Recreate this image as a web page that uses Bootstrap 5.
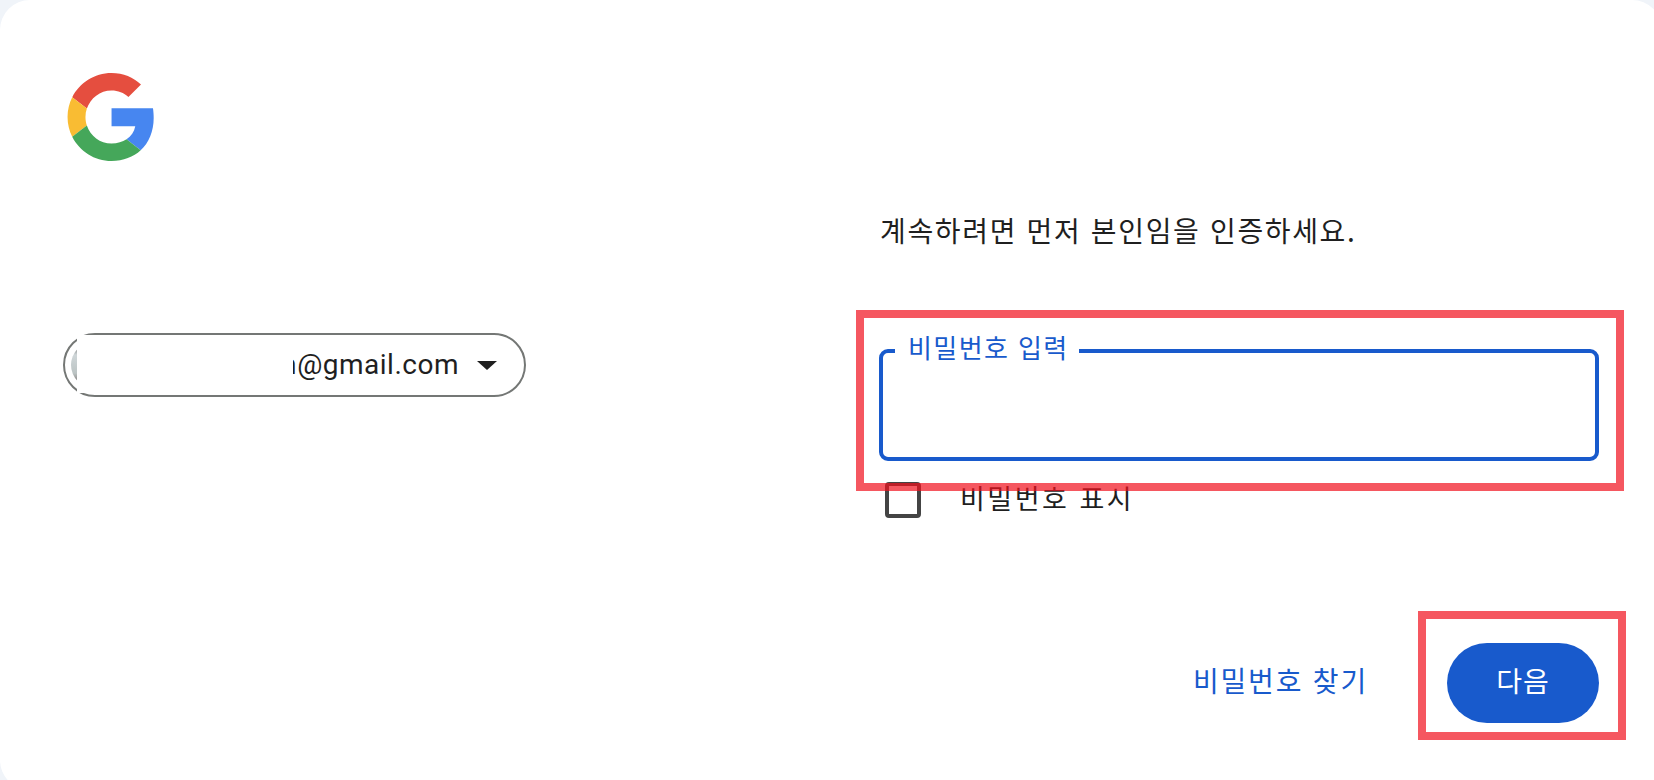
<!DOCTYPE html>
<html lang="ko">
<head>
    <meta charset="UTF-8">
    <meta name="viewport" content="width=device-width, initial-scale=1.0">
    <title>로그인</title>
    <link href="https://cdn.jsdelivr.net/npm/bootstrap@5.3.0/dist/css/bootstrap.min.css" rel="stylesheet">
    <style>
        html, body { height: 100%; }
        body {
            background: #f0f4f9;
            overflow: hidden;
            font-family: "Noto Sans CJK KR", "Liberation Sans", sans-serif;
            color: #1f1f1f;
        }
        .signin-card {
            position: relative;
            width: 1662px;
            height: 790px;
            background: #fff;
            border-radius: 30px;
            padding: 73px 0 0 63px;
        }
        .logo-g { width: 88px; height: 88px; display: block; margin-left: 4px; }
        .col-left { width: 463px; flex: none; }
        .col-right { width: 720px; flex: none; margin-left: 353px; }
        .account-chip {
            position: relative;
            height: 64px;
            margin-top: 172px;
            border: 2px solid #747775;
            border-radius: 32px;
            padding: 0 27px 0 6px;
            font-family: Roboto, sans-serif;
            font-size: 28px;
            letter-spacing: .5px;
        }
        .chip-avatar {
            width: 46px;
            height: 46px;
            border-radius: 50%;
            background: linear-gradient(#4e4a48, #cfd6d8 28%, #bcc4c4 68%, #5a4a48);
            flex: none;
        }
        .chip-arrow {
            width: 0;
            height: 0;
            border-style: solid;
            border-color: #1f1f1f transparent transparent;
            border-width: 9px 10px 0;
            margin-left: 18px;
        }
        .chip-mask { position: absolute; left: 12px; top: 0; width: 216px; height: 58px; background: #fff; }
        .intro-text { font-size: 28px; letter-spacing: 1.65px; line-height: 36px; margin: 0 0 101px 1px; padding-top: 139px; }
        .pw-field { position: relative; height: 112px; border: 4px solid #185acc; border-radius: 9px; }
        .pw-label {
            position: absolute;
            left: 12px;
            top: -24px;
            padding: 0 10px 0 13px;
            background: #fff;
            color: #185acc;
            font-size: 26px;
            letter-spacing: 1.4px;
            line-height: 36px;
            height: 32px;
        }
        .pw-row { margin-top: 21px; }
        .pw-check { width: 36px; height: 36px; border: 4px solid #444; border-radius: 4px; margin-left: 6px; }
        .pw-show { font-size: 27px; letter-spacing: 2.5px; line-height: 36px; margin: -2px 0 2px 39px; }
        .form-actions { margin-top: 125px; }
        .link-forgot { color: #185acc; font-size: 28px; letter-spacing: 1.8px; text-decoration: none; margin: 0 79px 7px 0; }
        .btn-next {
            width: 152px;
            height: 80px;
            border-radius: 40px;
            background: #185acc;
            border: 0;
            color: #fff;
            font-size: 28px;
            letter-spacing: 1px;
            padding-bottom: 12px;
        }
        .mark-box { position: absolute; border: 8px solid rgba(241, 16, 28, .7); pointer-events: none; }
        .mark-input { left: 856px; top: 310px; width: 768px; height: 181px; }
        .mark-next { left: 1418px; top: 611px; width: 208px; height: 129px; }
    </style>
</head>
<body>
    <div class="signin-card">
        <div class="d-flex">
            <div class="col-left">
                <svg class="logo-g" viewBox="0 0 47.4 48">
                    <path fill="#e54e3f" d="M24 9.5c3.54 0 6.71 1.22 9.21 3.6l6.85-6.85C35.9 2.38 30.47 0 24 0 14.62 0 6.51 5.38 2.56 13.22l7.98 6.19C12.43 13.72 17.74 9.5 24 9.5z"/>
                    <path fill="#4786f0" d="M46.98 24.55c0-1.9-.15-3.8-.38-5.35H24v9.82h12.94c-.58 2.96-2.26 5.48-4.78 7.18l7.73 6c4.51-4.18 7.09-10.36 7.09-17.65z"/>
                    <path fill="#f9bc33" d="M10.53 28.59c-.48-1.45-.76-2.99-.76-4.59s.27-3.14.76-4.59l-7.98-6.19C.92 16.46 0 20.12 0 24c0 3.88.92 7.54 2.56 10.78l7.97-6.19z"/>
                    <path fill="#45a75a" d="M24 48c6.48 0 11.93-2.13 15.89-5.81l-7.73-6c-2.15 1.45-4.92 2.3-8.16 2.3-6.26 0-11.57-4.22-13.47-9.91l-7.98 6.19C6.51 42.62 14.62 48 24 48z"/>
                </svg>
                <div class="account-chip d-flex align-items-center">
                    <span class="chip-avatar"></span>
                    <span class="ms-auto">sungmin.kim@gmail.com</span>
                    <span class="chip-arrow"></span>
                    <span class="chip-mask"></span>
                </div>
            </div>
            <div class="col-right">
                <p class="intro-text">계속하려면 먼저 본인임을 인증하세요.</p>
                <div class="pw-field">
                    <span class="pw-label">비밀번호 입력</span>
                </div>
                <div class="pw-row d-flex align-items-center">
                    <span class="pw-check"></span>
                    <span class="pw-show">비밀번호 표시</span>
                </div>
                <div class="form-actions d-flex align-items-center justify-content-end">
                    <a class="link-forgot" href="#">비밀번호 찾기</a>
                    <button type="button" class="btn btn-next">다음</button>
                </div>
            </div>
        </div>
        <div class="mark-box mark-input"></div>
        <div class="mark-box mark-next"></div>
    </div>
    <script src="https://cdn.jsdelivr.net/npm/bootstrap@5.3.0/dist/js/bootstrap.bundle.min.js"></script>
</body>
</html>
